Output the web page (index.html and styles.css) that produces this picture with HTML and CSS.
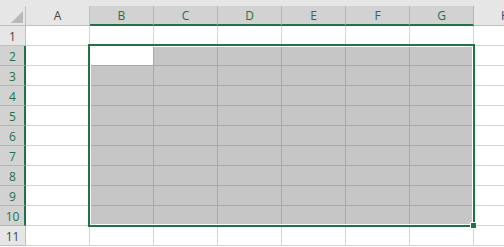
FILE: index.html
```html
<!DOCTYPE html>
<html>
<head>
<meta charset="utf-8">
<link rel="stylesheet" href="styles.css">
</head>
<body>
<div class="sheet">
  <div class="strip"></div>
  <div class="hdr">
    <div class="corner"><span class="tri"></span></div>
    <div class="ch">A</div>
    <div class="ch sel">B</div>
    <div class="ch sel">C</div>
    <div class="ch sel">D</div>
    <div class="ch sel">E</div>
    <div class="ch sel">F</div>
    <div class="ch sel">G</div>
    <div class="ch">H</div>
  </div>
  <div class="row"><div class="rh">1</div><div class="c"></div><div class="c"></div><div class="c"></div><div class="c"></div><div class="c"></div><div class="c"></div><div class="c"></div><div class="c"></div></div>
  <div class="row"><div class="rh sel">2</div><div class="c"></div><div class="c act"></div><div class="c s"></div><div class="c s"></div><div class="c s"></div><div class="c s"></div><div class="c s"></div><div class="c"></div></div>
  <div class="row"><div class="rh sel">3</div><div class="c"></div><div class="c s"></div><div class="c s"></div><div class="c s"></div><div class="c s"></div><div class="c s"></div><div class="c s"></div><div class="c"></div></div>
  <div class="row"><div class="rh sel">4</div><div class="c"></div><div class="c s"></div><div class="c s"></div><div class="c s"></div><div class="c s"></div><div class="c s"></div><div class="c s"></div><div class="c"></div></div>
  <div class="row"><div class="rh sel">5</div><div class="c"></div><div class="c s"></div><div class="c s"></div><div class="c s"></div><div class="c s"></div><div class="c s"></div><div class="c s"></div><div class="c"></div></div>
  <div class="row"><div class="rh sel">6</div><div class="c"></div><div class="c s"></div><div class="c s"></div><div class="c s"></div><div class="c s"></div><div class="c s"></div><div class="c s"></div><div class="c"></div></div>
  <div class="row"><div class="rh sel">7</div><div class="c"></div><div class="c s"></div><div class="c s"></div><div class="c s"></div><div class="c s"></div><div class="c s"></div><div class="c s"></div><div class="c"></div></div>
  <div class="row"><div class="rh sel">8</div><div class="c"></div><div class="c s"></div><div class="c s"></div><div class="c s"></div><div class="c s"></div><div class="c s"></div><div class="c s"></div><div class="c"></div></div>
  <div class="row"><div class="rh sel">9</div><div class="c"></div><div class="c s"></div><div class="c s"></div><div class="c s"></div><div class="c s"></div><div class="c s"></div><div class="c s"></div><div class="c"></div></div>
  <div class="row"><div class="rh sel">10</div><div class="c"></div><div class="c s"></div><div class="c s"></div><div class="c s"></div><div class="c s"></div><div class="c s"></div><div class="c s"></div><div class="c"></div></div>
  <div class="row"><div class="rh">11</div><div class="c"></div><div class="c"></div><div class="c"></div><div class="c"></div><div class="c"></div><div class="c"></div><div class="c"></div><div class="c"></div></div>
  <div class="selbox"></div>
  <div class="handle"></div>
</div>
</body>
</html>
```
FILE: styles.css
```css
html, body {
  margin: 0;
  padding: 0;
  background: #ffffff;
}
.sheet {
  position: relative;
  width: 504px;
  height: 247px;
  overflow: hidden;
  font-family: "Open Sans", "Liberation Sans", sans-serif;
  font-size: 12px;
  color: #444444;
}
.strip {
  height: 6px;
  background: #e6e6e6;
}
.hdr, .row {
  display: grid;
  grid-template-columns: 26px repeat(8, 64px);
}
.hdr {
  height: 20px;
}
.row {
  height: 20px;
}
.corner {
  background: #e6e6e6;
  border-right: 1px solid #c0c0c0;
  border-bottom: 1px solid #c0c0c0;
  box-sizing: border-box;
  display: flex;
  justify-content: flex-end;
  align-items: flex-end;
  padding: 0 2px 2px 0;
}
.tri {
  width: 0;
  height: 0;
  border-left: 12px solid transparent;
  border-bottom: 12px solid #b8b8b8;
}
.ch {
  background: #e6e6e6;
  border-right: 1px solid #c0c0c0;
  border-bottom: 1px solid #c0c0c0;
  box-sizing: border-box;
  display: flex;
  justify-content: center;
  align-items: center;
  white-space: nowrap;
}
.ch.sel {
  background: #d2d2d2;
  color: #217346;
  border-right-color: #b4b4b4;
  border-bottom: 2px solid #217346;
  padding-top: 1px;
}
.rh {
  background: #e6e6e6;
  border-right: 1px solid #c0c0c0;
  border-bottom: 1px solid #c0c0c0;
  box-sizing: border-box;
  display: flex;
  justify-content: center;
  align-items: center;
  padding-top: 1px;
}
.rh.sel {
  background: #d2d2d2;
  color: #217346;
  border-right: 2px solid #217346;
  border-bottom-color: #b4b4b4;
  padding-left: 1px;
}
.c {
  border-right: 1px solid #d4d4d4;
  border-bottom: 1px solid #d4d4d4;
  box-sizing: border-box;
}
.c.s {
  background: #c6c6c6;
  border-color: #a8a8a8;
}
.c.act {
  border-color: #a8a8a8;
}
.selbox {
  position: absolute;
  left: 88px;
  top: 44px;
  width: 387px;
  height: 183px;
  box-sizing: border-box;
  border: 2px solid #217346;
  box-shadow: inset 0 0 0 1px #ffffff;
}
.handle {
  position: absolute;
  left: 470px;
  top: 222px;
  width: 7px;
  height: 7px;
  box-sizing: border-box;
  background: #217346;
  border: 1px solid #ffffff;
}
```
